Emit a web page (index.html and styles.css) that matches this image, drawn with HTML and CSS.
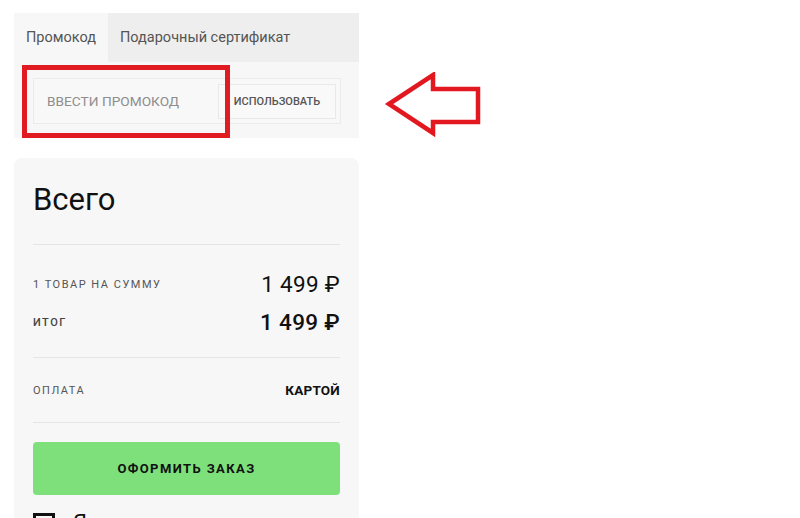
FILE: index.html
```html
<!DOCTYPE html>
<html lang="ru">
<head>
<meta charset="utf-8">
<link rel="stylesheet" href="styles.css">
</head>
<body>
<div class="page">
  <div class="promo">
    <div class="tabs">
      <div class="tab active">Промокод</div>
      <div class="tab">Подарочный сертификат</div>
    </div>
    <div class="promo-body">
      <div class="field">
        <span class="placeholder">ВВЕСТИ ПРОМОКОД</span>
        <span class="use-btn">ИСПОЛЬЗОВАТЬ</span>
      </div>
    </div>
    <div class="mark-rect"></div>
  </div>

  <div class="card">
    <div class="card-head"><h2 class="title">Всего</h2></div>
    <div class="sums">
      <div class="row"><span class="label">1 ТОВАР НА СУММУ</span><span class="price">1 499 ₽</span></div>
      <div class="row"><span class="label strong">ИТОГ</span><span class="price bold">1 499 ₽</span></div>
    </div>
    <div class="pay">
      <span class="label">ОПЛАТА</span><span class="pay-value">КАРТОЙ</span>
    </div>
    <div class="order-btn">ОФОРМИТЬ ЗАКАЗ</div>
    <div class="agree"><span class="box"></span><span class="agree-text">Я согласен с условиями</span></div>
  </div>

  <svg class="arrow" width="100" height="70" viewBox="0 0 100 70">
    <polygon points="5,32 49,3 49,17 94,17 94,50 49,50 49,61" fill="none" stroke="#e3171f" stroke-width="4.5" stroke-linejoin="miter"/>
  </svg>
</div>
</body>
</html>
```
FILE: styles.css
```css
* { box-sizing: border-box; }
html, body { margin: 0; padding: 0; background: #fff; }
body { font-family: Roboto, "Noto Sans", sans-serif; color: #111; }

.page {
  position: relative;
  width: 800px;
  height: 518px;
  overflow: hidden;
  padding: 13px 0 0 14px;
}

.promo {
  position: relative;
  width: 345px;
  background: #f7f7f7;
}
.tabs {
  display: flex;
  height: 49px;
  background: #eeeeee;
}
.tab {
  display: flex;
  align-items: center;
  padding: 0 12px;
  font-size: 14.5px;
  color: #555;
}
.tab.active { background: #f7f7f7; }

.promo-body {
  padding: 16px 18px 14px 19px;
}
.field {
  display: flex;
  align-items: center;
  justify-content: space-between;
  height: 46px;
  border: 1px solid #ebebeb;
  background: #f8f8f8;
  padding: 0 4px 0 13px;
}
.placeholder {
  font-size: 13.7px;
  color: #8e8e8e;
}
.use-btn {
  display: flex;
  align-items: center;
  justify-content: center;
  width: 118px;
  height: 35px;
  border: 1px solid #e9e9e9;
  background: #f9f9f9;
  font-size: 11px;
  font-weight: 500;
  color: #555;
}
.mark-rect {
  position: absolute;
  left: 8px;
  top: 52px;
  width: 208px;
  height: 73px;
  border: 5px solid #e11b22;
}

.card {
  margin-top: 20px;
  width: 345px;
  height: 400px;
  background: #f7f7f7;
  border-radius: 8px;
  padding: 24px 19px 0 19px;
}
.card-head {
  height: 63px;
  border-bottom: 1px solid #e5e5e5;
}
.title {
  margin: 0;
  font-size: 31px;
  line-height: 36px;
  font-weight: 400;
  color: #111;
}
.sums {
  padding: 20px 0 16px;
  border-bottom: 1px solid #e5e5e5;
}
.row {
  display: flex;
  align-items: center;
  justify-content: space-between;
  height: 38px;
}
.label {
  font-size: 11px;
  letter-spacing: 1.5px;
  color: #555;
}
.label.strong { font-weight: 500; color: #444; }
.price {
  font-size: 22.5px;
  color: #111;
  letter-spacing: 0.3px;
}
.price.bold { font-weight: 500; }

.pay {
  display: flex;
  align-items: center;
  justify-content: space-between;
  height: 65px;
  border-bottom: 1px solid #e5e5e5;
}
.pay-value {
  font-size: 13.5px;
  font-weight: 700;
  letter-spacing: 0.2px;
  color: #111;
}

.order-btn {
  margin-top: 19px;
  height: 53px;
  border-radius: 4px;
  background: #7ee07b;
  display: flex;
  align-items: center;
  justify-content: center;
  font-size: 13px;
  font-weight: 700;
  letter-spacing: 1.4px;
  color: #111;
}

.agree {
  margin-top: 18px;
  display: flex;
  align-items: flex-start;
  gap: 18px;
}
.box {
  width: 22px;
  height: 22px;
  border: 3px solid #111;
  flex: none;
}
.agree-text {
  font-size: 22px;
  line-height: 20px;
  color: #111;
}

.arrow {
  position: absolute;
  left: 384px;
  top: 72px;
}
```
